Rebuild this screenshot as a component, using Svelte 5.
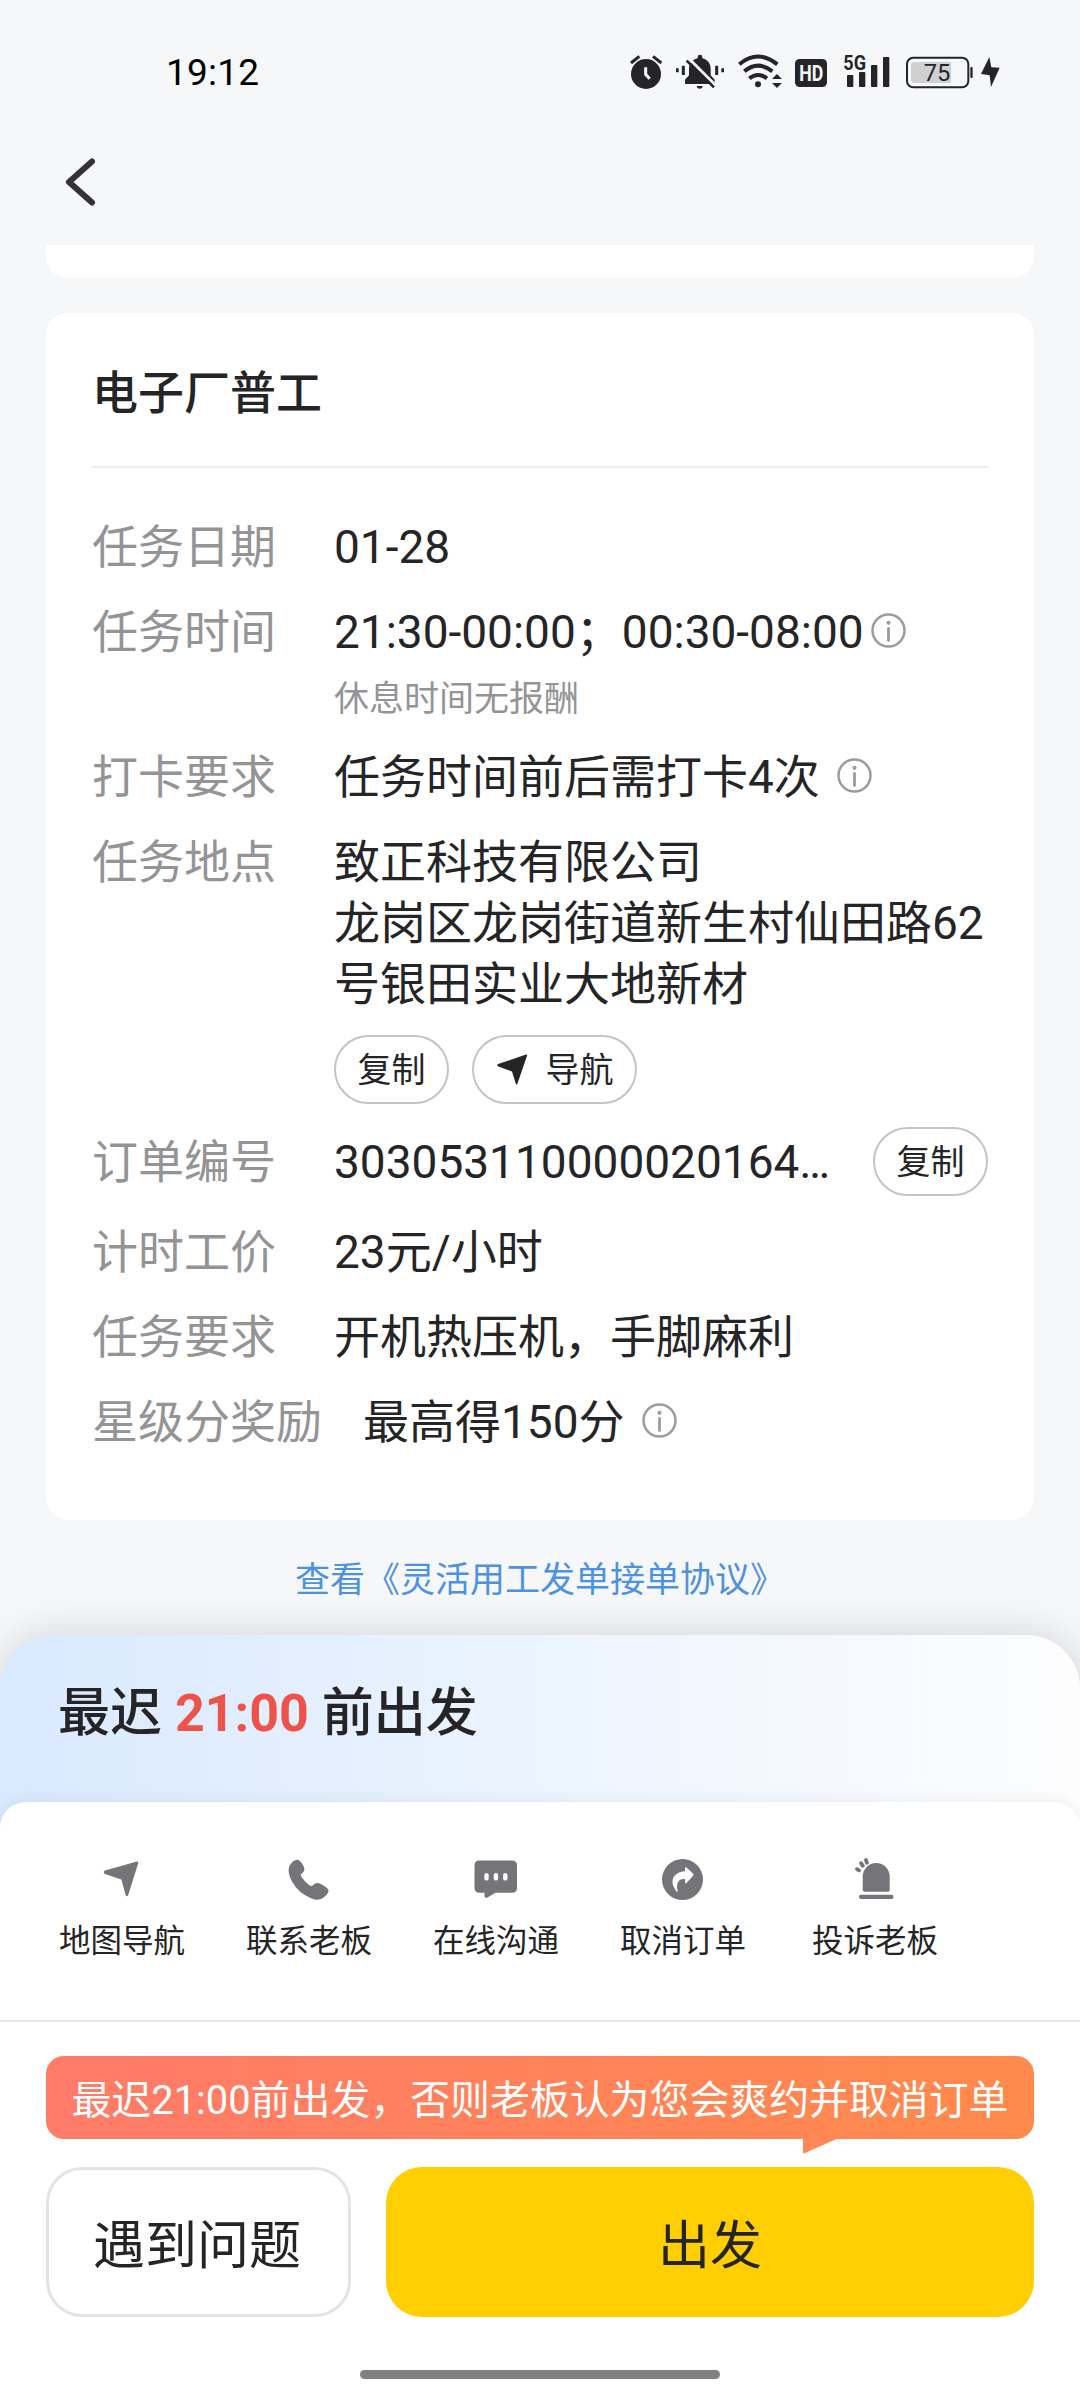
<script lang="ts">
	type Action = { label: string; icon: string };

	const order = {
		title: '电子厂普工',
		date: '01-28',
		time: '21:30-00:00；00:30-08:00',
		timeNote: '休息时间无报酬',
		clockRule: '任务时间前后需打卡4次',
		company: '致正科技有限公司',
		address: '龙岗区龙岗街道新生村仙田路62号银田实业大地新材',
		number: '303053110000020164…',
		wage: '23元/小时',
		requirement: '开机热压机，手脚麻利',
		reward: '最高得150分',
		departBefore: '21:00'
	};

	const actions: Action[] = [
		{ label: '地图导航', icon: 'nav' },
		{ label: '联系老板', icon: 'phone' },
		{ label: '在线沟通', icon: 'chat' },
		{ label: '取消订单', icon: 'cancel' },
		{ label: '投诉老板', icon: 'alarm' }
	];
</script>

{#snippet info()}
	<svg class="info" viewBox="0 0 35 35" aria-hidden="true">
		<circle cx="17.5" cy="17.5" r="16" fill="none" stroke="#9c9c9e" stroke-width="2.5" />
		<circle cx="17.5" cy="9.8" r="2.1" fill="#9c9c9e" />
		<path d="M17.5 15.5v12" stroke="#9c9c9e" stroke-width="2.8" stroke-linecap="round" />
	</svg>
{/snippet}

<div class="screen">
	<!-- Status bar -->
	<div class="status-bar">
		<span class="clock">19:12</span>
		<div class="status-icons">
			<svg width="39" height="44" viewBox="90 60 117 132">
				<circle cx="138" cy="132" r="45" />
				<path d="M93 99l25-20M184 99l-25-20" stroke="#252527" stroke-width="9" />
				<path d="M137 112v21l12 13" fill="none" stroke="#f6f7f9" stroke-width="9" />
			</svg>
			<svg width="62.33" height="44" viewBox="207 60 187 132">
				<path d="M255 162v-13l12-13v-20c0-15 10-27 26-31v-4a7 7 0 0 1 14 0v4c16 4 25 16 25 31v20l12 13v13z" />
				<path d="M290 168h18q-1 8-9 8t-9-8z" />
				<path d="M265 84l84 84" stroke="#f6f7f9" stroke-width="9" />
				<path d="M260 92l82 80" stroke="#252527" stroke-width="8" />
				<path d="M232 115v12M368 115v12" stroke="#252527" stroke-width="8" />
				<path d="M250 107v28M350 107v28" stroke="#252527" stroke-width="9" />
			</svg>
			<svg width="57.67" height="44" viewBox="394 60 173 132">
				<g fill="none" stroke="#252527" stroke-width="12">
					<path d="M419 103q56-47 114 0" />
					<path d="M434 124q41-34 84 0" />
					<path d="M449 145q26-20 53 0" />
				</g>
				<circle cx="475" cy="163" r="9" />
				<path d="M517 147l15-15 15 15zM517 159h30l-15 15z" />
			</svg>
			<svg width="46.33" height="44" viewBox="567 60 139 132">
				<rect x="585" y="87" width="96" height="84" rx="14" />
				<text class="hd" x="598" y="152" textLength="72" lengthAdjust="spacingAndGlyphs">HD</text>
			</svg>
			<svg width="62.67" height="44" viewBox="706 60 188 132">
				<text class="net" x="731" y="119" textLength="68" lengthAdjust="spacingAndGlyphs">5G</text>
				<rect x="742" y="135" width="19" height="36" rx="3" />
				<rect x="778" y="126" width="19" height="45" rx="3" />
				<rect x="814" y="105" width="19" height="66" rx="3" />
				<rect x="850" y="81" width="19" height="90" rx="3" />
			</svg>
			<svg width="78.67" height="44" viewBox="894 60 236 132">
				<rect x="921" y="83" width="184" height="89" rx="19" fill="none" stroke="#252527" stroke-width="6" />
				<path d="M944 96h109v63h-109q-11 0-11-11v-41q0-11 11-11z" fill="#cfd0d2" />
				<rect x="1111" y="111" width="7" height="33" rx="3" />
				<text class="level" x="1011" y="153" text-anchor="middle">75</text>
			</svg>
			<svg width="23.33" height="44" viewBox="1130 60 70 132">
				<path d="M1167 81l-25 51 26 4 4 35 26-58-25-1z" />
			</svg>
		</div>
	</div>

	<!-- Nav -->
	<div class="nav-bar">
		<button class="back" aria-label="返回">
			<svg width="32" height="48" viewBox="0 0 32 48">
				<path
					d="M28 3.500L5 24l23 20.500"
					fill="none"
					stroke="#333335"
					stroke-width="6"
					stroke-linecap="round"
					stroke-linejoin="round"
				/>
			</svg>
		</button>
	</div>

	<div class="card-tail"></div>

	<!-- Order details -->
	<section class="card">
		<h1>{order.title}</h1>
		<div class="rows">
			<div class="row">
				<span class="label">任务日期</span>
				<span class="value">{order.date}</span>
			</div>
			<div class="row">
				<span class="label">任务时间</span>
				<div class="value">
					<div class="line tight">{order.time}{@render info()}</div>
					<p class="note">{order.timeNote}</p>
				</div>
			</div>
			<div class="row">
				<span class="label">打卡要求</span>
				<div class="value line">{order.clockRule}{@render info()}</div>
			</div>
			<div class="row">
				<span class="label">任务地点</span>
				<div class="value">
					<div>{order.company}</div>
					<div>{order.address}</div>
					<div class="pills">
						<button class="pill">复制</button>
						<button class="pill">
							<svg width="32" height="31" viewBox="0 0 31 31">
								<path
									d="M1.600 10L29.500.5q1.500-.2 1 1.200L21 29.500q-.9 1.800-1.800 0L15.500 17.500 1.800 12.500q-2.200-1.500-.2-2.500z"
									fill="#252527"
								/>
							</svg>
							导航
						</button>
					</div>
				</div>
			</div>
			<div class="row order-row">
				<span class="label">订单编号</span>
				<span class="value">{order.number}</span>
				<button class="pill">复制</button>
			</div>
			<div class="row">
				<span class="label">计时工价</span>
				<span class="value">{order.wage}</span>
			</div>
			<div class="row">
				<span class="label">任务要求</span>
				<span class="value">{order.requirement}</span>
			</div>
			<div class="row">
				<span class="label wide">星级分奖励</span>
				<div class="value line">{order.reward}{@render info()}</div>
			</div>
		</div>
	</section>

	<a class="agreement" href="#agreement">查看《灵活用工发单接单协议》</a>

	<!-- Bottom sheet -->
	<div class="sheet">
		<div class="sheet-title">最迟 <strong>{order.departBefore}</strong> 前出发</div>

		<div class="panel">
			<div class="actions">
				{#each actions as action}
					<button class="action">
						<svg width="48" height="44" viewBox="0 0 48 44" fill="#747479">
							{#if action.icon === 'nav'}
								<path d="M7 12.600L38.800 3.500q2-.3 1.500 1.500L30.200 37q-1.300 2.500-2.600 0l-4.200-15.500L6.800 16q-2.200-2 .2-3.400z" />
							{:else if action.icon === 'phone'}
								<path d="M4.200 8.500Q8 1.200 13 1.700q2.600.8 5.500 6.300 2.500 4.500-1.800 7.500-1.800 1.500.2 4 3.500 5 7.500 7.800 2.500 1.800 4.300-.8 2.800-3 7.500-.3 6.200 3.300 7.200 5.600.8 3.200-4.200 7.200-5 4.700-12.700 1.400Q13.500 35.500 6.700 23 2.300 14.500 4.200 8.500z" />
							{:else if action.icon === 'chat'}
								<path
									fill-rule="evenodd"
									d="M7.500 2.500H40q5 0 5 5V30q0 4.800-5 4.800H23.500l-8 4.700q-3 1.200-3-1.600v-3.100h-5q-5 0-5-4.800V7.500q0-5 5-5zM14.500 15a2.200 2.200 0 0 0-2.200 2.200v3.200a2.200 2.200 0 0 0 4.400 0v-3.200a2.200 2.200 0 0 0-2.200-2.200zM23.900 15a2.200 2.200 0 0 0-2.200 2.200v3.200a2.200 2.200 0 0 0 4.400 0v-3.200a2.200 2.200 0 0 0-2.200-2.200zM33.300 15a2.200 2.200 0 0 0-2.200 2.200v3.200a2.200 2.200 0 0 0 4.400 0v-3.200a2.200 2.200 0 0 0-2.200-2.200z"
								/>
							{:else if action.icon === 'cancel'}
								<circle cx="23.500" cy="21.500" r="20.500" />
								<path
									d="M26 9.600q.5-.8 1.500 0l6.600 6.200q1 1 0 2l-6.600 7.300q-1.200.8-1.500-.4v-3.500c-6-.8-9.500 3.500-7.200 12.300q-.6.700-1.200 0C10.500 24.500 12.500 14.500 26 13.300z"
									fill="#fff"
								/>
							{:else}
								<path d="M11.700 32V18.500a13.500 13.500 0 0 1 27 0V32q0 1.700-1.700 1.700H13.400q-1.700 0-1.700-1.700z" />
								<rect x="8" y="36.800" width="34.500" height="4.200" rx="2" />
								<path
									d="M6 11.200l2 1.100M10 5.200l1.800 2.600M15 2l.9 2.800"
									stroke="#747479"
									stroke-width="3.800"
									stroke-linecap="round"
								/>
							{/if}
						</svg>
						<span>{action.label}</span>
					</button>
				{/each}
			</div>

			<div class="footer">
				<div class="tip">
					最迟{order.departBefore}前出发，否则老板认为您会爽约并取消订单
					<svg class="tip-tail" width="38" height="16" viewBox="0 0 38 16">
						<path d="M0 0h38q-4 0-8 2.500L2 15q-2 1-2-1z" fill="#ff8656" />
					</svg>
				</div>
				<div class="buttons">
					<button class="btn problem">遇到问题</button>
					<button class="btn depart">出发</button>
				</div>
				<div class="home-bar"></div>
			</div>
		</div>
	</div>
</div>

<style>
	:global(body) {
		margin: 0;
		background: #f6f7f9;
	}

	.screen {
		display: flex;
		flex-direction: column;
		width: 1080px;
		height: 2400px;
		overflow: hidden;
		background: #f6f7f9;
		color: #252527;
		font-family: Roboto, 'Noto Sans CJK SC', sans-serif;
	}

	button {
		margin: 0;
		padding: 0;
		border: 0;
		background: none;
		color: inherit;
		font: inherit;
	}

	svg {
		display: block;
		flex-shrink: 0;
	}

	/* Status bar */
	.status-bar {
		display: flex;
		align-items: center;
		justify-content: space-between;
		box-sizing: border-box;
		height: 144px;
		padding: 0 80px 0 166px;
	}

	.clock {
		color: #000;
		font-size: 37px;
		font-weight: 450;
		letter-spacing: 0.2px;
	}

	.status-icons {
		display: flex;
		fill: #252527;
	}

	.hd {
		fill: #f6f7f9;
		font-size: 65px;
		font-weight: 700;
	}

	.net {
		font-size: 58px;
		font-weight: 700;
	}

	.level {
		font-size: 71px;
	}

	/* Nav */
	.nav-bar {
		display: flex;
		align-items: center;
		height: 75px;
		padding: 0 64px 26px;
	}

	.card-tail {
		height: 33px;
		margin: 0 46px 35px;
		border-radius: 0 0 22px 22px;
		background: #fff;
	}

	/* Details card */
	.card {
		box-sizing: border-box;
		height: 1207px;
		flex-shrink: 0;
		margin: 0 46px;
		padding: 50px 46px 0;
		border-radius: 22px;
		background: #fff;
	}

	h1 {
		margin: 0;
		padding: 0 0 43px;
		border-bottom: 2px solid #ededee;
		font-size: 46px;
		font-weight: 500;
		line-height: 60px;
	}

	.rows {
		display: flex;
		flex-direction: column;
		gap: 24px;
		padding-top: 49px;
		font-size: 46px;
		line-height: 61px;
	}

	.row {
		display: flex;
	}

	.label {
		flex: 0 0 242px;
		box-sizing: border-box;
		color: #949496;
		white-space: nowrap;
	}

	.label.wide {
		flex-basis: 271px;
	}

	.value {
		flex: 1;
		min-width: 0;
	}

	.line {
		display: flex;
		align-items: center;
		gap: 17px;
	}

	.line.tight {
		gap: 7px;
	}

	.info {
		width: 35px;
		height: 35px;
		margin-bottom: 4px;
	}

	.note {
		margin: 13px 0 0;
		color: #949496;
		font-size: 35px;
		line-height: 47px;
	}

	.pills {
		display: flex;
		gap: 23px;
		padding-top: 20px;
	}

	.pill {
		display: flex;
		align-items: center;
		gap: 18px;
		box-sizing: border-box;
		height: 69px;
		padding: 0 21.5px;
		border: 2px solid #c4c4c6;
		border-radius: 35px;
		font-size: 34px;
		line-height: 40px;
	}

	.order-row {
		align-items: center;
		margin: -1px 0 2px;
	}

	.order-row > span {
		padding-top: 2px;
	}

	.agreement {
		margin-top: 41px;
		color: #4d92e0;
		font-size: 35px;
		line-height: 40px;
		text-align: center;
		text-decoration: none;
	}

	/* Bottom sheet */
	.sheet {
		flex: 1;
		display: flex;
		flex-direction: column;
		margin-top: 34px;
		border-radius: 54px 54px 0 0;
		background: linear-gradient(90deg, #d9e9fe 0%, #eff6ff 58%, #fdfdfe 100%);
		box-shadow: 0 0 40px rgba(0, 0, 0, 0.15);
	}

	.sheet-title {
		height: 167px;
		padding-left: 58px;
		font-size: 52px;
		font-weight: 500;
		line-height: 157px;
		box-sizing: border-box;
	}

	.sheet-title strong {
		color: #ee5349;
		font-weight: 700;
	}

	.panel {
		flex: 1;
		display: flex;
		flex-direction: column;
		border-radius: 26px 26px 0 0;
		background: #fff;
		box-shadow: 0 -3px 14px rgba(0, 0, 0, 0.05);
	}

	.actions {
		display: flex;
		gap: 61px;
		box-sizing: border-box;
		height: 220px;
		padding: 56px 0 0 59px;
		border-bottom: 2px solid #e9e9eb;
	}

	.action {
		display: flex;
		flex-direction: column;
		align-items: center;
		gap: 20px;
		width: 126px;
		height: 104px;
		font-size: 31.5px;
		line-height: 40px;
		white-space: nowrap;
	}

	.action:last-child {
		margin-left: 5px;
	}

	.footer {
		display: flex;
		flex-direction: column;
		padding: 34px 46px 0;
	}

	.tip {
		position: relative;
		height: 83px;
		border-radius: 18px;
		background: linear-gradient(90deg, #ff7b6a, #ff8a4b);
		color: #fff;
		font-size: 39.9px;
		line-height: 90px;
		text-align: center;
		white-space: nowrap;
	}

	.tip-tail {
		position: absolute;
		left: 757px;
		top: 82px;
	}

	.buttons {
		display: flex;
		gap: 35px;
		margin-top: 28px;
	}

	.btn {
		box-sizing: border-box;
		height: 150px;
		padding-bottom: 2px;
		border-radius: 36px;
		font-size: 52px;
	}

	.problem {
		width: 305px;
		padding-right: 3px;
		border: 3px solid #e4e4e5;
	}

	.depart {
		flex: 1;
		background: #ffcf03;
	}

	.home-bar {
		align-self: center;
		width: 360px;
		height: 9px;
		margin-top: 53px;
		border-radius: 5px;
		background: #808080;
	}
</style>
